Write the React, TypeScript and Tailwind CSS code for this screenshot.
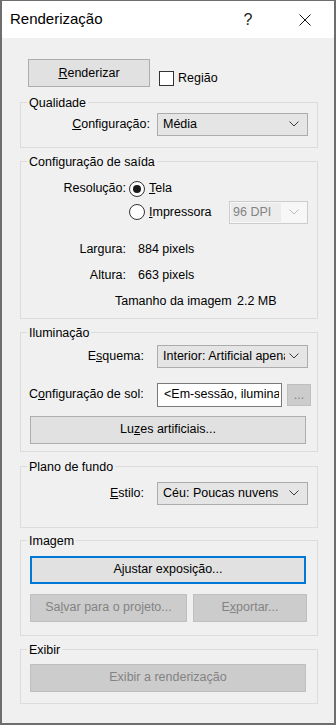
import React from "react";

const font = { fontFamily: '"Liberation Sans", Arial, sans-serif' };

function Chevron({ light }: { light?: boolean }) {
    return (
        <svg width="10" height="6" viewBox="0 0 10 6" className="shrink-0">
            <path d="M0.5 0.5 L5 5 L9.5 0.5" fill="none" stroke={light ? "#bcbcbc" : "#3c3c3c"} strokeWidth="1" />
        </svg>
    );
}

function Select({ value, width }: { value: string; width: string }) {
    return (
        <div className={`${width} h-[23px] bg-[#e5e5e5] border border-[#acacac] flex items-center pl-[5px] pr-[8px]`}>
            <span className="flex-1 overflow-hidden whitespace-nowrap mr-[4px]">{value}</span>
            <Chevron />
        </div>
    );
}

function Radio({ checked }: { checked?: boolean }) {
    return (
        <div className="w-[16px] h-[16px] rounded-full border border-[#333333] bg-white flex items-center justify-center shrink-0">
            {checked && <div className="w-[8px] h-[8px] rounded-full bg-[#1a1a1a]" />}
        </div>
    );
}

function Group({ title, className, children }: { title: string; className?: string; children: React.ReactNode }) {
    return (
        <fieldset className={`ml-[18px] w-[298px] border border-[#dcdcdc] ${className ?? ""}`}>
            <legend className="ml-[6px] px-[2px] h-[16px] leading-[16px] text-black">{title}</legend>
            {children}
        </fieldset>
    );
}

export default function App() {
    return (
        <div className="w-[336px] h-[725px] border-2 border-t border-[#6e6e6e] bg-[#f0f0f0] flex flex-col text-[12.5px] text-black" style={font}>
            {/* title bar */}
            <div className="h-[37px] bg-white flex items-center pl-[8px] shrink-0">
                <span className="text-[15px]">Renderização</span>
                <div className="ml-auto w-[46px] flex justify-center text-[16px] font-light text-[#222]">?</div>
                <div className="ml-[11px] mr-[6px] w-[46px] flex justify-center">
                    <svg width="12" height="12" viewBox="0 0 12 12">
                        <path d="M0.5 0.5 L11.5 11.5 M11.5 0.5 L0.5 11.5" stroke="#111" strokeWidth="1" />
                    </svg>
                </div>
            </div>

            {/* render button row */}
            <div className="mt-[21px] ml-[26px] flex items-start">
                <button className="w-[122px] h-[28px] bg-[#e1e1e1] border border-[#adadad]">
                    <u>R</u>enderizar
                </button>
                <label className="ml-[9px] mt-[10px] flex items-center">
                    <span className="w-[15px] h-[15px] bg-white border border-[#333333]" />
                    <span className="ml-[4px]">Região</span>
                </label>
            </div>

            <Group title="Qualidade" className="mt-[7px] h-[53px]">
                <div className="flex items-center pt-[2px]">
                    <div className="w-[129px] text-right"><u>C</u>onfiguração:</div>
                    <div className="ml-[7px]"><Select value="Média" width="w-[151px]" /></div>
                </div>
            </Group>

            <Group title="Configuração de saída" className="mt-[6px] h-[165px]">
                <div className="flex items-center pt-[11px] h-[27px]">
                    <div className="w-[105px] text-right">Resolução:</div>
                    <div className="ml-[3px]"><Radio checked /></div>
                    <span className="ml-[4px]"><u>T</u>ela</span>
                </div>
                <div className="flex items-center mt-[4px] pr-[9px]">
                    <div className="ml-[108px]"><Radio /></div>
                    <span className="ml-[4px]"><u>I</u>mpressora</span>
                    <div className="ml-auto w-[79px] h-[23px] border border-[#cccccc] bg-[#f7f7f7] flex items-center pl-[1px] pr-[8px]">
                        <span className="flex-1 h-[19px] mr-[8px] bg-[#ececec] text-[#838383] leading-[19px] pl-[2px]">96 DPI</span>
                        <Chevron light />
                    </div>
                </div>
                <div className="flex items-center mt-[18px] h-[16px]">
                    <div className="w-[105px] text-right">Largura:</div>
                    <span className="ml-[12px]">884 pixels</span>
                </div>
                <div className="flex items-center mt-[10px] h-[16px]">
                    <div className="w-[105px] text-right">Altura:</div>
                    <span className="ml-[12px]">663 pixels</span>
                </div>
                <div className="flex items-center mt-[10px] h-[16px]">
                    <div className="ml-[94px] w-[122px]">Tamanho da imagem</div>
                    <span>2.2 MB</span>
                </div>
            </Group>

            <Group title="Iluminação" className="mt-[6px] h-[127px]">
                <div className="flex items-center pt-[4px]">
                    <div className="w-[123px] text-right">E<u>s</u>quema:</div>
                    <div className="ml-[13px]"><Select value="Interior: Artificial apenas" width="w-[151px]" /></div>
                </div>
                <div className="flex items-center mt-[15px]">
                    <div className="w-[136px] pl-[8px]">C<u>o</u>nfiguração de sol:</div>
                    <div className="w-[125px] h-[24px] bg-white border border-[#7a7a7a] flex items-center pl-[6px] pr-[2px]">
                        <span className="overflow-hidden whitespace-nowrap">&lt;Em-sessão, iluminação solar&gt;</span>
                    </div>
                    <div className="ml-[5px] w-[24px] h-[22px] bg-[#cccccc] border border-[#bfbfbf] text-[#838383] flex items-center justify-center leading-none">...</div>
                </div>
                <button className="mt-[9px] ml-[9px] w-[276px] h-[28px] bg-[#e1e1e1] border border-[#adadad]">
                    Lu<u>z</u>es artificiais...
                </button>
            </Group>

            <Group title="Plano de fundo" className="mt-[7px] h-[69px]">
                <div className="flex items-center pt-[7px]">
                    <div className="w-[123px] text-right"><u>E</u>stilo:</div>
                    <div className="ml-[13px]"><Select value="Céu: Poucas nuvens" width="w-[151px]" /></div>
                </div>
            </Group>

            <Group title="Imagem" className="mt-[5px] h-[103px]">
                <button className="mt-[7px] ml-[9px] w-[276px] h-[28px] bg-[#e1e1e1] border-2 border-[#0078d7]">
                    Ajustar exposição...
                </button>
                <div className="flex mt-[10px] ml-[9px]">
                    <button className="w-[157px] h-[28px] bg-[#cccccc] border border-[#bfbfbf] text-[#838383]">
                        Sa<u>l</u>var para o projeto...
                    </button>
                    <button className="ml-[6px] w-[114px] h-[28px] bg-[#cccccc] border border-[#bfbfbf] text-[#838383]">
                        E<u>x</u>portar...
                    </button>
                </div>
            </Group>

            <Group title="Exibir" className="mt-[6px] h-[62px]">
                <button className="mt-[6px] ml-[9px] w-[276px] h-[28px] bg-[#cccccc] border border-[#bfbfbf] text-[#838383]">
                    Exibir a renderização
                </button>
            </Group>
        </div>
    );
}
